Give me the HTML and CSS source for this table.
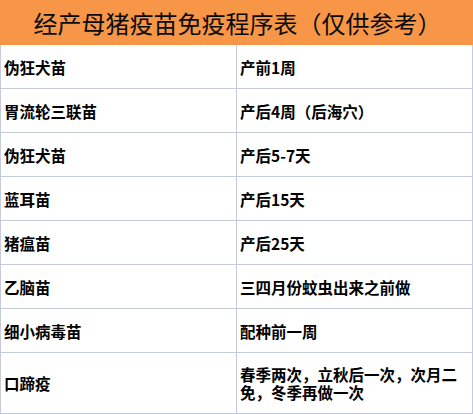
FILE: index.html
```html
<!DOCTYPE html>
<html lang="zh">
<head>
<meta charset="utf-8">
<link rel="stylesheet" href="styles.css">
</head>
<body>
<div class="sheet">
  <div class="title">经产母猪疫苗免疫程序表（仅供参考）</div>
  <div class="row"><div class="cell name">伪狂犬苗</div><div class="cell">产前1周</div></div>
  <div class="row"><div class="cell name">胃流轮三联苗</div><div class="cell">产后4周（后海穴）</div></div>
  <div class="row"><div class="cell name">伪狂犬苗</div><div class="cell">产后5-7天</div></div>
  <div class="row"><div class="cell name">蓝耳苗</div><div class="cell">产后15天</div></div>
  <div class="row"><div class="cell name">猪瘟苗</div><div class="cell">产后25天</div></div>
  <div class="row"><div class="cell name">乙脑苗</div><div class="cell">三四月份蚊虫出来之前做</div></div>
  <div class="row"><div class="cell name">细小病毒苗</div><div class="cell">配种前一周</div></div>
  <div class="row last"><div class="cell name">口蹄疫</div><div class="cell">春季两次，立秋后一次，次月二免，冬季再做一次</div></div>
</div>
</body>
</html>
```
FILE: styles.css
```css
html, body {
  margin: 0;
  padding: 0;
  background: #fff;
}
.sheet {
  width: 473px;
  box-sizing: border-box;
  border-left: 1px solid #c5cbdc;
  border-right: 1px solid #c5cbdc;
  font-family: "Noto Sans CJK SC", "Noto Sans", sans-serif;
  color: #000;
}
.title {
  height: 45px;
  margin: 0 -1px;
  background: #f79646;
  display: flex;
  align-items: center;
  justify-content: center;
  font-size: 24px;
  font-weight: 400;
  color: #0a0a0a;
  padding-left: 2px;
}
.row {
  display: grid;
  grid-template-columns: 236px 1fr;
  height: 44px;
  box-sizing: border-box;
  border-bottom: 1px solid #c5cbdc;
}
.row.last {
  height: 61px;
}
.cell {
  display: flex;
  align-items: center;
  padding: 0 4px 0 3px;
  font-size: 15.5px;
  font-weight: 700;
  line-height: 18px;
}
.name {
  border-right: 1px solid #c5cbdc;
}
```
